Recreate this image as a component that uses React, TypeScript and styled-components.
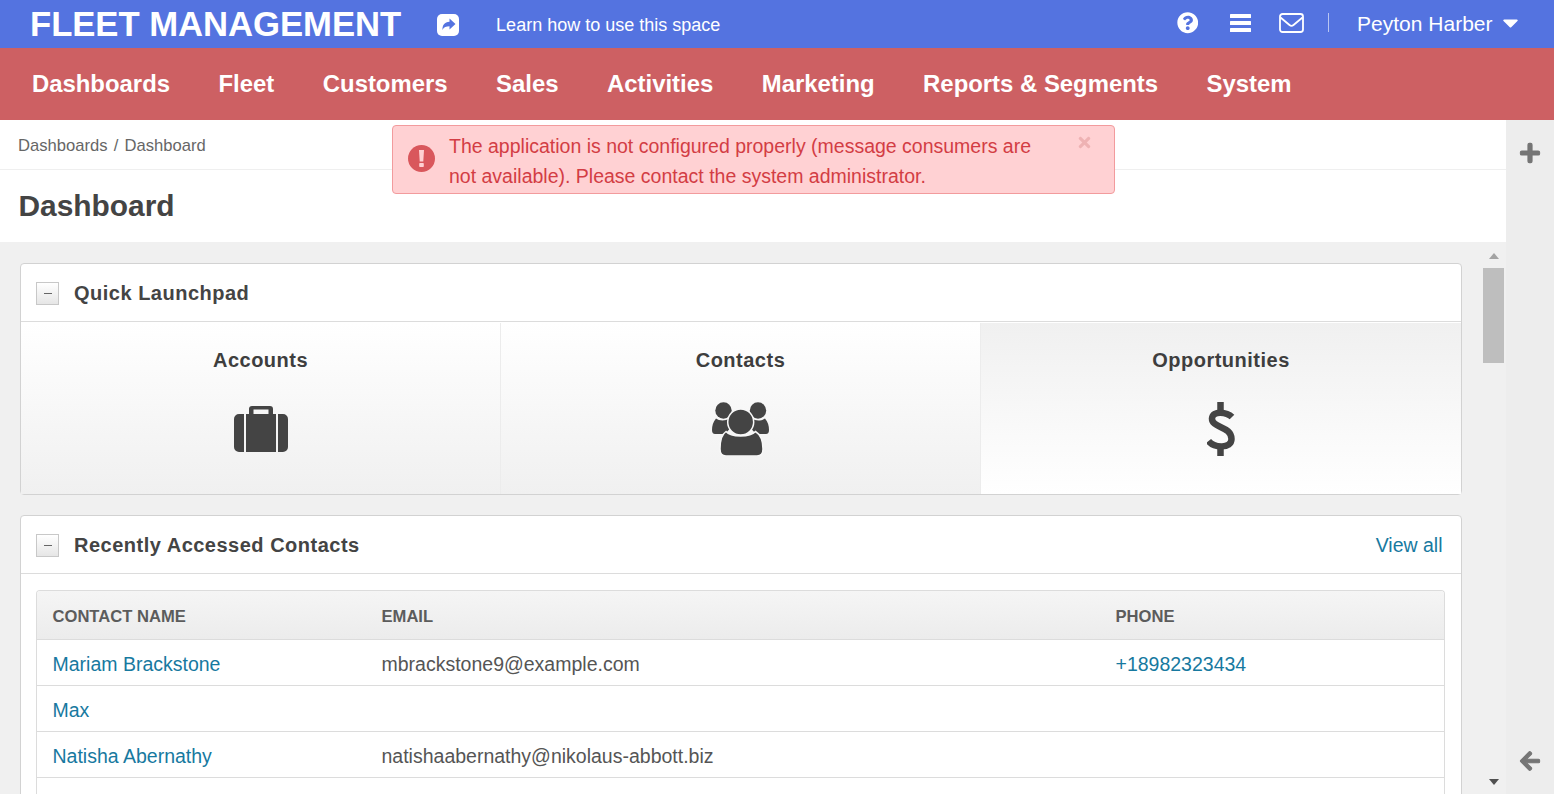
import React from "react";
import styled, { createGlobalStyle } from "styled-components";
import { FaQuestionCircle, FaCaretDown, FaTimes, FaPlus, FaArrowLeft } from "react-icons/fa";

const Global = createGlobalStyle`
  html, body { margin: 0; padding: 0; height: 100%; overflow: hidden; }
  body { font-family: "Liberation Sans", Arial, sans-serif; color: #444; background: #fff; }
  * { box-sizing: border-box; }
`;
const Page = styled.div`height: 794px; width: 1554px; display: flex; flex-direction: column; overflow: hidden; position: relative;`;
const TopBar = styled.header`height: 48px; flex: none; background: #5473e0; color: #fff; display: flex; align-items: center; padding: 0 31.5px 0 30px;`;
const Brand = styled.div`font-size: 34.7px; font-weight: 700; line-height: 48px; letter-spacing: -0.05px;`;
const ShareBtn = styled.span`display: flex; margin-left: 36px; margin-top: 1px;`;
const Learn = styled.a`font-size: 18px; margin-left: 37px; margin-top: 2px;`;
const TopRight = styled.div`margin-left: auto; display: flex; align-items: center;`;
const TopIcon = styled.span<{ $gap: number; $size?: number }>`display: flex; font-size: ${p => p.$size ?? 20}px; margin-left: ${p => p.$gap}px; margin-top: -2px;`;
const Divider = styled.span`width: 1px; height: 19px; background: #b9c6f2; margin: -4px 28px 0 24px;`;
const User = styled.span`font-size: 21px;`;
const Caret = styled.span`display: flex; font-size: 25px; margin-left: 5px; margin-top: -4px;`;
const Nav = styled.nav`height: 72px; flex: none; background: #cd6063; display: flex; align-items: center; padding-left: 7.7px;`;
const NavItem = styled.a`color: #fff; font-size: 23.9px; font-weight: 700; padding: 0 24.25px;`;
const Body = styled.div`flex: 1; min-height: 0; display: flex;`;
const Main = styled.main`width: 1506px; display: flex; flex-direction: column; background: #f0f0f0;`;
const Side = styled.aside`flex: 1; background: #ededed; display: flex; flex-direction: column; justify-content: space-between; align-items: center; color: #757575; font-size: 22px; padding: 22px 0 22px;`;
const SideIcon = styled.span`display: flex; svg { stroke: currentColor; stroke-width: 24px; }`;
const Crumbs = styled.div`height: 50px; flex: none; background: #fff; border-bottom: 1px solid #efefef; display: flex; align-items: center; padding: 2px 18px 0; font-size: 16.6px; color: #666;`;
const Sep = styled.span`margin: 0 6.2px;`;
const TitleRow = styled.div`height: 72px; flex: none; background: #fff; display: flex; align-items: center; padding-left: 18.5px;`;
const Title = styled.h1`margin: 0; font-size: 29.9px; font-weight: 700; color: #444;`;
const Alert = styled.div`position: absolute; left: 392px; top: 125px; width: 723px; height: 69px; background: #ffd1d3; border: 1px solid #f29b9d; border-radius: 4px; color: #d33d44; font-size: 19.5px; line-height: 30px; padding: 5px 70px 0 56px;`;
const AlertIcon = styled.span`position: absolute; left: 15px; top: 19px; display: flex;`;
const AlertClose = styled.span`position: absolute; right: 21px; top: 8px; display: flex; font-size: 17px; color: #eeb2b3;`;
const ScrollArea = styled.div`flex: 1; min-height: 0; display: flex; overflow: hidden;`;
const Column = styled.div`width: 1462px; flex: none; padding: 21px 0 0 20px; display: flex; flex-direction: column; gap: 20px;`;
const Card = styled.section`background: #fff; border: 1px solid #d2d2d2; border-radius: 4px; flex: none;`;
const CardHead = styled.div`height: 58px; border-bottom: 1px solid #dcdcdc; display: flex; align-items: center; padding: 0 18.5px 0 15px;`;
const Toggle = styled.span`width: 23px; height: 23px; border: 1px solid #c8c8c8; background: linear-gradient(#fff, #e6e6e6); display: flex; align-items: center; justify-content: center; margin-top: 2px;`;
const ToggleBar = styled.span`width: 8px; height: 1.5px; background: #666;`;
const CardTitle = styled.h2`margin: 2px 0 0 15px; font-size: 20px; font-weight: 700; letter-spacing: 0.5px; color: #444;`;
const ViewAll = styled.a`margin-left: auto; font-size: 19.5px; margin-top: 2px; color: #17799f;`;
const Tiles = styled.div`display: flex; height: 172px; padding-top: 1px;`;
const Tile = styled.div<{ $w: number; $active?: boolean }>`width: ${p => p.$w}px; flex: none; border-left: 1px solid #ececec; &:first-child { border-left: 0; } background: ${p => p.$active ? "linear-gradient(#f0f0f0, #fff)" : "linear-gradient(#fff, #f0f0f0)"}; display: flex; flex-direction: column; align-items: center; padding-top: 25px;`;
const TileName = styled.div`font-size: 20px; font-weight: 700; line-height: 24px; letter-spacing: 0.5px; color: #3e3e3e;`;
const TileIcon = styled.div`height: 54px; margin-top: 30px; display: flex; align-items: center; justify-content: center; color: #444;`;
const TableWrap = styled.div`margin: 16px 16px 0 15px; border: 1px solid #dcdcdc; border-bottom: 0; border-radius: 4px 4px 0 0; overflow: hidden;`;
const Table = styled.table`width: 100%; border-collapse: collapse; table-layout: fixed;`;
const Th = styled.th<{ $w?: number }>`height: 48px; background: linear-gradient(#f5f5f5, #ececec); border-bottom: 1px solid #dcdcdc; text-align: left; padding: 4px 15.5px 0; font-size: 16.6px; font-weight: 700; color: #5c5c5c; ${p => p.$w ? `width:${p.$w}px;` : ""}`;
const Td = styled.td`height: 46px; border-bottom: 1px solid #dcdcdc; padding: 4px 15.5px 0; font-size: 19.5px; color: #555; white-space: nowrap;`;
const Link = styled.a`color: #17799f;`;
const ScrollBar = styled.div`width: 21px; margin-left: 21px; flex: none; display: flex; flex-direction: column; align-items: center; position: relative; padding-top: 11px;`;
const ArrowUp = styled.span`width: 0; height: 0; border: 5.5px solid transparent; border-top: 0; border-bottom: 6px solid #a3a3a3;`;
const Thumb = styled.div`width: 21px; height: 95px; background: #bebebe; margin-top: 9px;`;
const ArrowDown = styled.span`margin-top: auto; margin-bottom: 9px; width: 0; height: 0; border: 5.5px solid transparent; border-bottom: 0; border-top: 6px solid #505050;`;

const Share = () => (
  <svg width="22" height="22" viewBox="0 0 22 22">
    <rect width="22" height="22" rx="5" fill="#fff" />
    <path d="M12.500 4.500 18.500 10l-6 5.500v-3.200c-3.300 0-5.700.7-7 3.700-.3-4.700 2-7.900 7-8.200V4.500z" fill="#5473e0" />
  </svg>
);
const Bars = () => (
  <svg width="21" height="18" viewBox="0 0 21 18" fill="currentColor">
    <rect width="21" height="4" rx=".5" />
    <rect y="7" width="21" height="4" rx=".5" />
    <rect y="14" width="21" height="4" rx=".5" />
  </svg>
);
const Envelope = () => (
  <svg width="25" height="20" viewBox="0 0 25 20" fill="none" stroke="currentColor" strokeWidth="1.800">
    <rect x="1" y="1" width="23" height="18" rx="2.500" />
    <path d="M1.500 4.500 10.500 12c1.200 1 2.800 1 4 0L23.500 4.500" />
  </svg>
);
const Exclaim = () => (
  <svg width="27" height="27" viewBox="0 0 27 27">
    <circle cx="13.500" cy="13.500" r="13.500" fill="#d9575c" />
    <path d="M11 5h5l-.7 11.500h-3.600L11 5z" fill="#ffd1d3" />
    <rect x="11.200" y="18" width="4.600" height="4" rx=".8" fill="#ffd1d3" />
  </svg>
);
const Suitcase = () => (
  <svg width="54" height="46" viewBox="0 0 54 46" fill="currentColor">
    <path d="M15 8V3a3 3 0 0 1 3-3h18a3 3 0 0 1 3 3v5h3v38H12V8h3zm4.500 0h15V3.500h-15V8z" fillRule="evenodd" />
    <path d="M10 8v38H5a5 5 0 0 1-5-5V13a5 5 0 0 1 5-5h5zM44 8h5a5 5 0 0 1 5 5v28a5 5 0 0 1-5 5h-5V8z" />
  </svg>
);
const Users = () => (
  <svg width="57" height="54" viewBox="0 0 57 54" fill="currentColor">
    <circle cx="11.500" cy="8.500" r="8.200" />
    <circle cx="46" cy="8.500" r="8.200" />
    <path d="M4 16.500c3 2.500 10 2.500 13 0l1 10-5 5.500H3c-2 0-3-1.500-3-4 0-4 1-8 4-11.500z" />
    <path d="M53 16.500c-3 2.500-10 2.500-13 0l-1 10 5 5.500h10c2 0 3-1.500 3-4 0-4-1-8-4-11.500z" />
    <path d="M14 29.500c5 6 24 6 29.500 0 5 3 7.500 10 7.500 17.500 0 4-2 7-6 7H14c-4 0-6-3-6-7 0-7.500 1.500-14.500 6-17.500z" stroke="#f8f8f8" strokeWidth="1.500" />
    <circle cx="28.700" cy="20" r="13" stroke="#f8f8f8" strokeWidth="1.500" />
  </svg>
);
const Dollar = () => (
  <svg width="28" height="54" viewBox="0 0 28 54" fill="none" stroke="currentColor" strokeWidth="6.500">
    <path d="M13.500 0v9M13.500 45v9" />
    <path d="M25 15C20 10 5.500 8 5 16.500 4.500 26 24.500 24 24.500 37 24.500 47 7 46 1.500 39" />
  </svg>
);

export default function App() {
  return (
    <Page>
      <Global />
      <TopBar>
        <Brand>FLEET MANAGEMENT</Brand>
        <ShareBtn><Share /></ShareBtn>
        <Learn>Learn how to use this space</Learn>
        <TopRight>
          <TopIcon $gap={0} $size={21.5}><FaQuestionCircle /></TopIcon>
          <TopIcon $gap={32}><Bars /></TopIcon>
          <TopIcon $gap={28}><Envelope /></TopIcon>
          <Divider />
          <User>Peyton Harber</User>
          <Caret><FaCaretDown /></Caret>
        </TopRight>
      </TopBar>
      <Nav>
        {["Dashboards", "Fleet", "Customers", "Sales", "Activities", "Marketing", "Reports & Segments", "System"].map(n => <NavItem key={n}>{n}</NavItem>)}
      </Nav>
      <Body>
        <Main>
          <Crumbs>Dashboards<Sep>/</Sep>Dashboard</Crumbs>
          <TitleRow><Title>Dashboard</Title></TitleRow>
          <ScrollArea>
            <Column>
              <Card>
                <CardHead><Toggle><ToggleBar /></Toggle><CardTitle>Quick Launchpad</CardTitle></CardHead>
                <Tiles>
                  <Tile $w={479}><TileName>Accounts</TileName><TileIcon><Suitcase /></TileIcon></Tile>
                  <Tile $w={480}><TileName>Contacts</TileName><TileIcon><Users /></TileIcon></Tile>
                  <Tile $w={481} $active><TileName>Opportunities</TileName><TileIcon><Dollar /></TileIcon></Tile>
                </Tiles>
              </Card>
              <Card>
                <CardHead><Toggle><ToggleBar /></Toggle><CardTitle>Recently Accessed Contacts</CardTitle><ViewAll>View all</ViewAll></CardHead>
                <TableWrap>
                  <Table>
                    <thead><tr><Th $w={329}>CONTACT NAME</Th><Th $w={734}>EMAIL</Th><Th>PHONE</Th></tr></thead>
                    <tbody>
                      <tr><Td><Link>Mariam Brackstone</Link></Td><Td>mbrackstone9@example.com</Td><Td><Link>+18982323434</Link></Td></tr>
                      <tr><Td><Link>Max</Link></Td><Td /><Td /></tr>
                      <tr><Td><Link>Natisha Abernathy</Link></Td><Td>natishaabernathy@nikolaus-abbott.biz</Td><Td /></tr>
                      <tr><Td /><Td /><Td /></tr>
                    </tbody>
                  </Table>
                </TableWrap>
              </Card>
            </Column>
            <ScrollBar>
              <ArrowUp />
              <Thumb />
              <ArrowDown />
            </ScrollBar>
          </ScrollArea>
        </Main>
        <Side>
          <SideIcon><FaPlus /></SideIcon>
          <SideIcon><FaArrowLeft /></SideIcon>
        </Side>
      </Body>
      <Alert>
        <AlertIcon><Exclaim /></AlertIcon>
        The application is not configured properly (message consumers are not available). Please contact the system administrator.
        <AlertClose><FaTimes /></AlertClose>
      </Alert>
    </Page>
  );
}
